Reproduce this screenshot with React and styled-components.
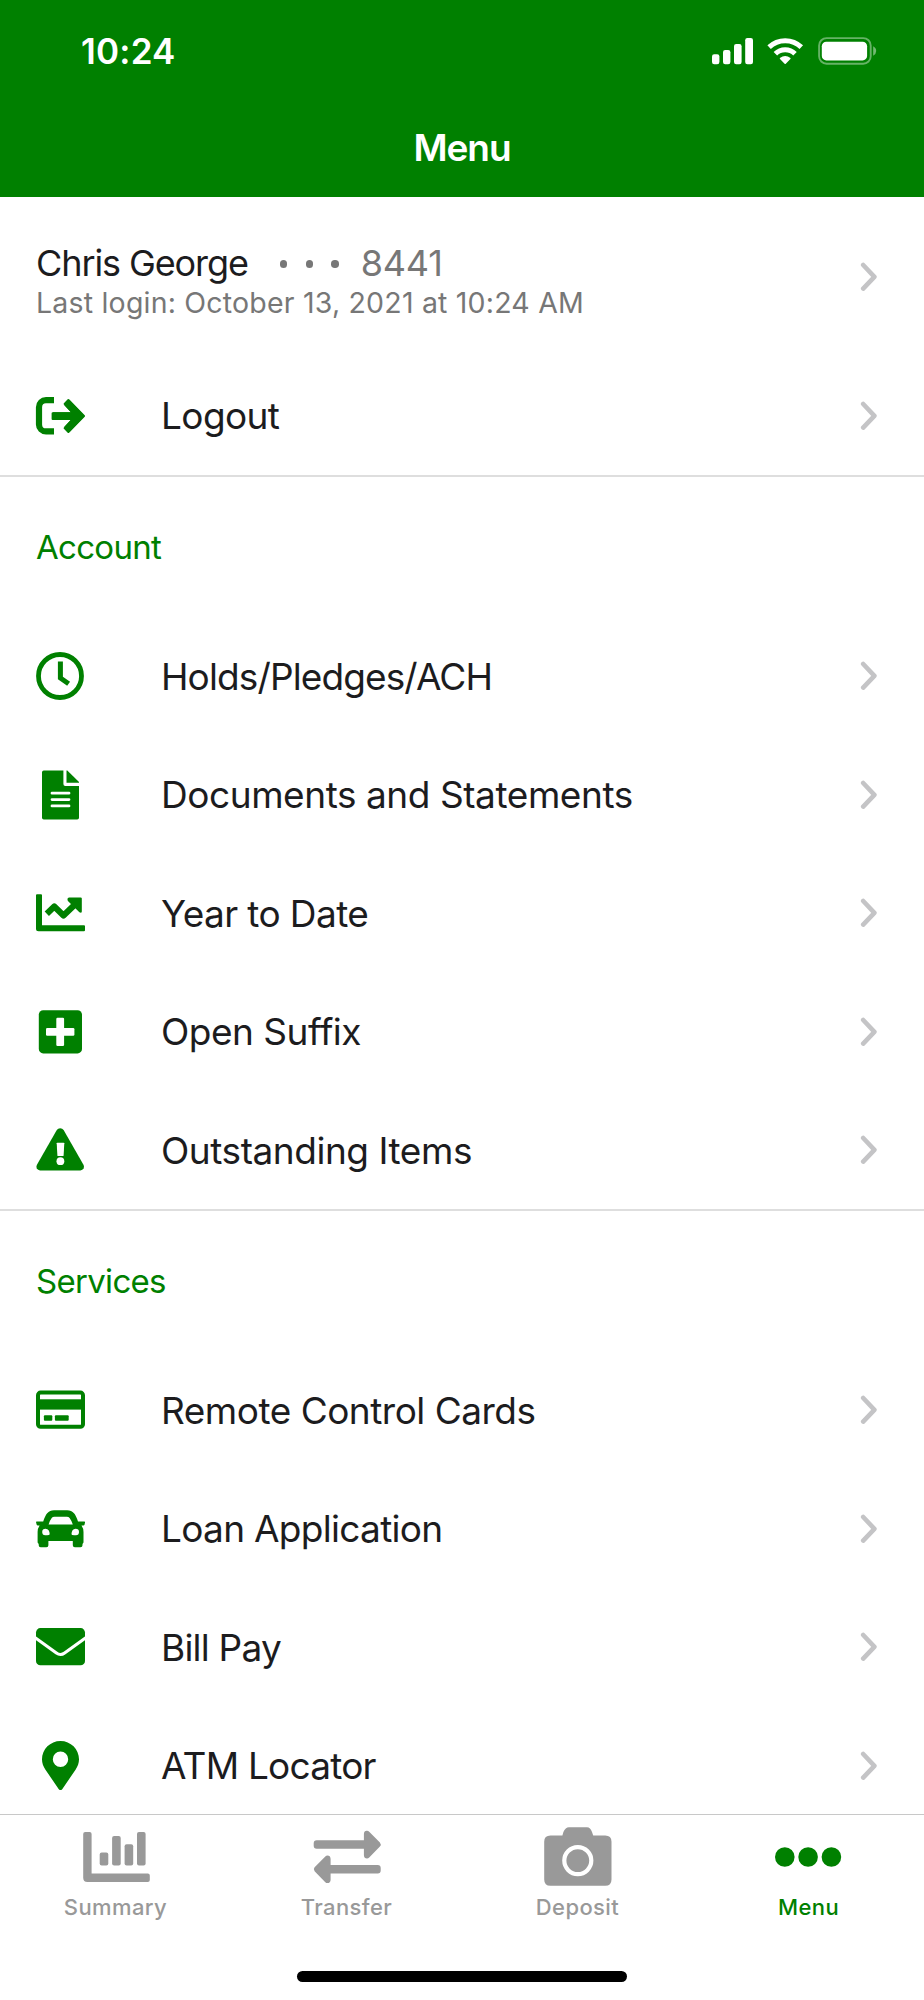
import styled, { createGlobalStyle } from "styled-components";

const GlobalStyle = createGlobalStyle`
  * {
    box-sizing: border-box;
  }
  body {
    margin: 0;
    background-color: #fff;
    font-family: Inter, "Liberation Sans", sans-serif;
  }
`;
const Screen = styled.div`
  display: flex;
  flex-direction: column;
  width: 924px;
  height: 2000px;
  overflow: hidden;
  background-color: #fff;
  color: #1c1c1e;
`;
const Header = styled.header`
  flex: none;
  height: 196.6px;
  background-color: #008000;
  color: #fff;
`;
const StatusBar = styled.div`
  display: flex;
  align-items: center;
  justify-content: space-between;
  height: 101px;
  padding: 0 46px 0 81px;
`;
const Time = styled.span`
  font-size: 35px;
  font-weight: 600;
  letter-spacing: 0.2px;
`;
const StatusIcons = styled.svg`
  width: 168px;
  height: 30px;
  fill: #fff;
`;
const Title = styled.h1`
  display: flex;
  align-items: center;
  justify-content: center;
  height: 93px;
  margin: 0;
  font-size: 37px;
  font-weight: 600;
  letter-spacing: -1.1px;
`;
const Content = styled.main`
  flex: 1;
  min-height: 0;
  overflow: hidden;
`;
const Section = styled.section`
  border-bottom: 2px solid #dedede;
`;
const SectionTitle = styled.h2`
  display: flex;
  align-items: center;
  height: 140px;
  margin: 0;
  padding: 0 36px 1px;
  font-size: 33px;
  font-weight: 400;
  letter-spacing: -0.7px;
  color: #008000;
`;
const Profile = styled.div`
  display: flex;
  align-items: center;
  justify-content: space-between;
  height: 160px;
  padding: 0 47px 0 36px;
`;
const ProfileName = styled.div`
  display: flex;
  align-items: center;
  height: 44px;
  margin-top: 8px;
  font-size: 36px;
  letter-spacing: -1.1px;
`;
const Dots = styled.span`
  display: flex;
  gap: 18.2px;
  margin: 3px 22px 0 32px;
`;
const Dot = styled.i`
  width: 7.5px;
  height: 7.5px;
  border-radius: 50%;
  background-color: #777;
`;
const Digits = styled.span`
  letter-spacing: -0.2px;
  color: #777;
`;
const LastLogin = styled.div`
  height: 36px;
  font-size: 28.5px;
  line-height: 36px;
  letter-spacing: 0.2px;
  color: #777;
`;
const Row = styled.div`
  display: flex;
  align-items: center;
  height: 118.44px;
  padding: 0 47px 0 34px;
`;
const RowIcon = styled.svg`
  flex: none;
  width: 52px;
  height: 52px;
  margin-right: 75px;
  color: #008000;
`;
const RowLabel = styled.span`
  flex: 1;
  font-size: 37px;
  letter-spacing: ${(props) => props.$tracking}px;
  white-space: nowrap;
`;
const ChevronIcon = styled.svg`
  flex: none;
  width: 17px;
  height: 30px;
  fill: none;
  stroke: #c4c4c6;
  stroke-width: 4.6;
  stroke-linecap: round;
  stroke-linejoin: round;
`;
const TabBar = styled.nav`
  display: flex;
  flex: none;
  height: 115px;
  border-top: 1.5px solid #c8c8c8;
`;
const Tab = styled.div`
  display: flex;
  flex: 1;
  flex-direction: column;
  align-items: center;
  padding-top: 11px;
  color: ${(props) => (props.$active ? "#008000" : "#999")};
`;
const TabIcon = styled.svg`
  width: 70px;
  height: 62px;
  fill: currentColor;
`;
const TabLabel = styled.span`
  margin-top: 5px;
  font-size: 22px;
  font-weight: 500;
  line-height: 28px;
  letter-spacing: 0.4px;
`;
const HomeArea = styled.div`
  display: flex;
  flex: none;
  justify-content: center;
  height: 71px;
  padding-top: 42px;
`;
const HomeIndicator = styled.div`
  width: 330px;
  height: 11px;
  border-radius: 6px;
  background-color: #000;
`;

const LogoutIcon = () => (
  <RowIcon viewBox="0 0 52 52">
    <path
      d="M20 10.2H12A7 7 0 0 0 5 17.2V34.4A7 7 0 0 0 12 41.4H20"
      fill="none"
      stroke="currentColor"
      strokeWidth="6.2"
    />
    <path
      d="M19 26H44M33 12.8L45.6 26L33 39.2"
      fill="none"
      stroke="currentColor"
      strokeWidth="7.4"
    />
    <path
      d="M18.6 23.2H39L30.6 13.9L34.4 10L50 26L34.4 42L30.6 38.1L39 29H18.6Z"
      fill="currentColor"
      stroke="currentColor"
      strokeWidth="2"
      strokeLinejoin="round"
    />
  </RowIcon>
);
const ClockIcon = () => (
  <RowIcon viewBox="0 0 52 52" fill="none" stroke="currentColor">
    <circle cx="26" cy="26" r="21.5" strokeWidth="4.8" />
    <path d="M26.4 11.5V28L34.6 33.8" strokeWidth="5" />
  </RowIcon>
);
const DocumentIcon = () => (
  <RowIcon viewBox="0 0 52 52" fill="currentColor">
    <path d="M9.8 1.6H29.4V15Q29.4 16.9 31.3 16.9H45V48.8Q45 50.6 43.2 50.6H9.8Q8 50.6 8 48.8V3.4Q8 1.6 9.8 1.6Z" />
    <path d="M32.5 1.6H33.3L45 13.1V13.8H32.5Z" />
    <path
      d="M18 24.2H35M18 30.6H35M18 36.9H35"
      stroke="#fff"
      strokeWidth="2.8"
      strokeLinecap="round"
    />
  </RowIcon>
);
const TrendIcon = () => (
  <RowIcon viewBox="0 0 52 52" fill="currentColor">
    <path d="M3 7.3H7Q8 7.3 8 8.3V38.2H50Q51 38.2 51 39.2V43.3Q51 44.3 50 44.3H4.5Q2 44.3 2 41.8V8.3Q2 7.3 3 7.3Z" />
    <path
      d="M12.8 26.8L20.3 19.6L29.5 28.4L42 16.5"
      fill="none"
      stroke="currentColor"
      strokeWidth="6.2"
      strokeLinejoin="round"
    />
    <path d="M35 10.4H46.6Q47.8 10.4 47.8 11.6V24.5Q47.6 26.4 45.4 25.3L33.9 14Q32.6 11 35 10.4Z" />
  </RowIcon>
);
const PlusIcon = () => (
  <RowIcon viewBox="0 0 52 52" fill="currentColor">
    <rect x="4.8" y="4.2" width="43.2" height="43.2" rx="4.4" />
    <rect x="12" y="22" width="28.4" height="7.8" rx="1.2" fill="#fff" />
    <rect x="22.3" y="11.8" width="7.8" height="28.2" rx="1.2" fill="#fff" />
  </RowIcon>
);
const WarningIcon = () => (
  <RowIcon viewBox="0 0 52 52" fill="currentColor">
    <path d="M22.8 6.1Q24 4.2 26.2 4.2Q28.4 4.2 29.6 6.1L49.6 41Q50.4 42.9 49.6 44.6Q48.5 46.4 46.4 46.4H6Q3.9 46.4 2.8 44.6Q2 42.9 2.8 41Z" />
    <path
      d="M23.3 18.7H29.7Q30.3 18.7 30.3 19.3L29.6 31.4Q29.5 32 29 32H24Q23.5 32 23.4 31.4L22.7 19.3Q22.7 18.7 23.3 18.7Z"
      fill="#fff"
    />
    <circle cx="26.4" cy="37.2" r="3.9" fill="#fff" />
  </RowIcon>
);
const CardIcon = () => (
  <RowIcon viewBox="0 0 52 52" fill="currentColor">
    <rect
      x="4"
      y="8.6"
      width="45"
      height="34.2"
      rx="2.6"
      fill="none"
      stroke="currentColor"
      strokeWidth="4"
    />
    <rect x="3" y="15.3" width="47" height="10.3" />
    <rect x="9.9" y="31.2" width="8.4" height="5.6" rx="1" />
    <rect x="20.9" y="31.2" width="13.8" height="5.6" rx="1" />
  </RowIcon>
);
const CarIcon = () => (
  <RowIcon viewBox="0 0 52 52" fill="currentColor">
    <path
      fillRule="evenodd"
      d="M2.6 18.5H9.2Q11.2 12.5 13.2 10.3Q15.8 7.2 20 7.2H33.2Q37.4 7.2 40 10.3Q42 12.5 44 18.5H50.4Q51.2 18.5 51 19.4L50.5 21.8Q50.3 22.6 49.4 22.6H47.5Q49.5 25.5 49.5 29V39.5L48.5 41V42.2Q48.5 44.2 46.5 44.2H40.8Q38.8 44.2 38.8 42.2V38H14.4V42.2Q14.4 44.2 12.4 44.2H6.7Q4.7 44.2 4.7 42.2V41L3.6 39.5V29Q3.6 25.5 5.6 22.6H3.8Q2.9 22.6 2.7 21.8L2.1 19.4Q1.9 18.5 2.6 18.5ZM14.6 21.6H38.8Q37.5 17.5 35.6 15Q34.7 13.7 32.8 13.7H20.5Q18.6 13.7 17.7 15Q15.6 17.7 14.6 21.6ZM8.2 28.9Q8.2 32 11.2 32.2Q15.5 32.7 15.7 31.2Q15.6 26.3 11.6 25.8Q8.2 25.9 8.2 28.9ZM45 28.9Q45 25.9 41.6 25.8Q37.6 26.3 37.5 31.2Q37.7 32.7 42 32.2Q45 32 45 28.9Z"
    />
  </RowIcon>
);
const MailIcon = () => (
  <RowIcon viewBox="0 0 52 52" fill="currentColor">
    <rect x="2" y="7.1" width="49" height="37.2" rx="4.4" />
    <path
      d="M0.5 16.3L22.4 32Q26.5 35 30.6 32L52.5 16.3"
      fill="none"
      stroke="#fff"
      strokeWidth="3.1"
    />
  </RowIcon>
);
const PinIcon = () => (
  <RowIcon viewBox="0 0 52 52" fill="currentColor">
    <path
      fillRule="evenodd"
      d="M26.5 0.9C16.3 0.9 8 9.1 8 19.3C8 23.3 9.3 26.3 11.3 29.5L24.8 49.2Q26.5 51 28.2 49.2L41.7 29.5C43.7 26.3 45 23.3 45 19.3C45 9.1 36.7 0.9 26.5 0.9ZM26.5 11.6A7.7 7.7 0 1 1 26.5 27A7.7 7.7 0 1 1 26.5 11.6Z"
    />
  </RowIcon>
);
const Chevron = () => (
  <ChevronIcon viewBox="0 0 17 30">
    <path d="M3.2 3L14.4 14.8L3.2 26.6" />
  </ChevronIcon>
);

const accountItems = [
  { label: "Holds/Pledges/ACH", Icon: ClockIcon, tracking: -0.88 },
  { label: "Documents and Statements", Icon: DocumentIcon, tracking: -0.44 },
  { label: "Year to Date", Icon: TrendIcon, tracking: -0.6 },
  { label: "Open Suffix", Icon: PlusIcon, tracking: -0.5 },
  { label: "Outstanding Items", Icon: WarningIcon, tracking: -0.45 },
];
const serviceItems = [
  { label: "Remote Control Cards", Icon: CardIcon, tracking: -0.5 },
  { label: "Loan Application", Icon: CarIcon, tracking: -0.7 },
  { label: "Bill Pay", Icon: MailIcon, tracking: -0.78 },
  { label: "ATM Locator", Icon: PinIcon, tracking: -0.78 },
];

const MenuRow = ({ label, Icon, tracking = -0.6 }) => {
  return (
    <Row>
      <Icon />
      <RowLabel $tracking={tracking}>{label}</RowLabel>
      <Chevron />
    </Row>
  );
};

const App = () => {
  return (
    <Screen>
      <GlobalStyle />
      <Header>
        <StatusBar>
          <Time>10:24</Time>
          <StatusIcons viewBox="0 0 168 30">
            {/* signal */}
            <rect x="2" y="18.3" width="7.4" height="10" rx="2.2" />
            <rect x="13" y="14" width="7.4" height="14.3" rx="2.2" />
            <rect x="24" y="8" width="7.6" height="20.3" rx="2.2" />
            <rect x="35.2" y="2" width="7.8" height="26.3" rx="2.2" />
            {/* wifi */}
            <g fill="none" stroke="#fff" strokeWidth="5">
              <path d="M59.1 11.1A23.3 23.3 0 0 1 91.3 11.1" />
              <path d="M65.4 17.7A14 14 0 0 1 85 17.7" />
            </g>
            <path d="M69.9 22.1Q75.2 18 80.5 22.1Q80.8 22.6 80.4 23L75.8 27.8Q75.2 28.3 74.6 27.8L70 23Q69.6 22.6 69.9 22.1Z" />
            {/* battery */}
            <rect
              x="109.1"
              y="2.1"
              width="51.6"
              height="25.6"
              rx="7.5"
              fill="none"
              stroke="#fff"
              strokeWidth="1.9"
              opacity="0.4"
            />
            <rect x="111.8" y="5.8" width="45.3" height="18.6" rx="4.5" />
            <path d="M163.2 10.3Q166.2 11.9 166.2 15Q166.2 18.1 163.2 19.7Z" opacity="0.45" />
          </StatusIcons>
        </StatusBar>
        <Title>Menu</Title>
      </Header>
      <Content>
        <Section>
          <Profile>
            <div>
              <ProfileName>
                Chris George
                <Dots>
                  <Dot />
                  <Dot />
                  <Dot />
                </Dots>
                <Digits>8441</Digits>
              </ProfileName>
              <LastLogin>Last login: October 13, 2021 at 10:24 AM</LastLogin>
            </div>
            <Chevron />
          </Profile>
          <MenuRow label="Logout" Icon={LogoutIcon} />
        </Section>
        <Section>
          <SectionTitle>Account</SectionTitle>
          {accountItems.map((item) => (
            <MenuRow key={item.label} {...item} />
          ))}
        </Section>
        <Section>
          <SectionTitle>Services</SectionTitle>
          {serviceItems.map((item) => (
            <MenuRow key={item.label} {...item} />
          ))}
        </Section>
      </Content>
      <TabBar>
        <Tab>
          <TabIcon viewBox="0 0 70 62">
            <path d="M4.2 6H8.6Q10.6 6 10.6 8V47.6H66.8Q68.8 47.6 68.8 49.6V54Q68.8 56 66.8 56H6.4Q2.2 56 2.2 51.8V8Q2.2 6 4.2 6Z" />
            <rect x="18.7" y="26.6" width="8.6" height="13" rx="2" />
            <rect x="31.1" y="10" width="8.6" height="29.6" rx="2" />
            <rect x="43.6" y="18.2" width="8.6" height="21.4" rx="2" />
            <rect x="56" y="6" width="8.6" height="33.6" rx="2" />
          </TabIcon>
          <TabLabel>Summary</TabLabel>
        </Tab>
        <Tab>
          <TabIcon viewBox="0 0 70 62">
            <path d="M4.7 14.2H51.9V8Q52.1 4.6 55 4.8Q56.3 4.8 57.2 5.7L67.9 16.6Q69.6 18.6 67.9 20.6L57.2 31.5Q56.3 32.4 55 32.4Q52.1 32.4 51.9 29.2V22.7H4.7Q1.7 22.7 1.7 19.7V17.2Q1.7 14.2 4.7 14.2Z" />
            <path d="M65.7 39.1H18.6V33Q18.4 29.6 15.5 29.6Q14.2 29.6 13.3 30.5L2.6 41.3Q0.9 43.3 2.6 45.3L13.3 56.2Q14.2 57.1 15.5 57.1Q18.4 57.1 18.6 54V47.6H65.7Q68.7 47.6 68.7 44.6V42.1Q68.7 39.1 65.7 39.1Z" />
          </TabIcon>
          <TabLabel>Transfer</TabLabel>
        </Tab>
        <Tab>
          <TabIcon viewBox="0 0 70 62">
            <path d="M7.5 9.4H19.4L20.4 6Q22.4 1.2 26 1.2H44Q47.4 1.2 49 6L50.2 9.4H62.2Q68.5 9.4 68.5 15.7V53.4Q68.5 59.7 62.2 59.7H7.5Q1.2 59.7 1.2 53.4V15.7Q1.2 9.4 7.5 9.4Z" />
            <circle cx="34.8" cy="34.6" r="13.5" stroke="#fff" strokeWidth="4.2" />
          </TabIcon>
          <TabLabel>Deposit</TabLabel>
        </Tab>
        <Tab $active>
          <TabIcon viewBox="0 0 70 62">
            <circle cx="10.8" cy="31" r="9.8" />
            <circle cx="34.1" cy="31" r="9.8" />
            <circle cx="57.4" cy="31" r="9.8" />
          </TabIcon>
          <TabLabel>Menu</TabLabel>
        </Tab>
      </TabBar>
      <HomeArea>
        <HomeIndicator />
      </HomeArea>
    </Screen>
  );
};

export default App;
